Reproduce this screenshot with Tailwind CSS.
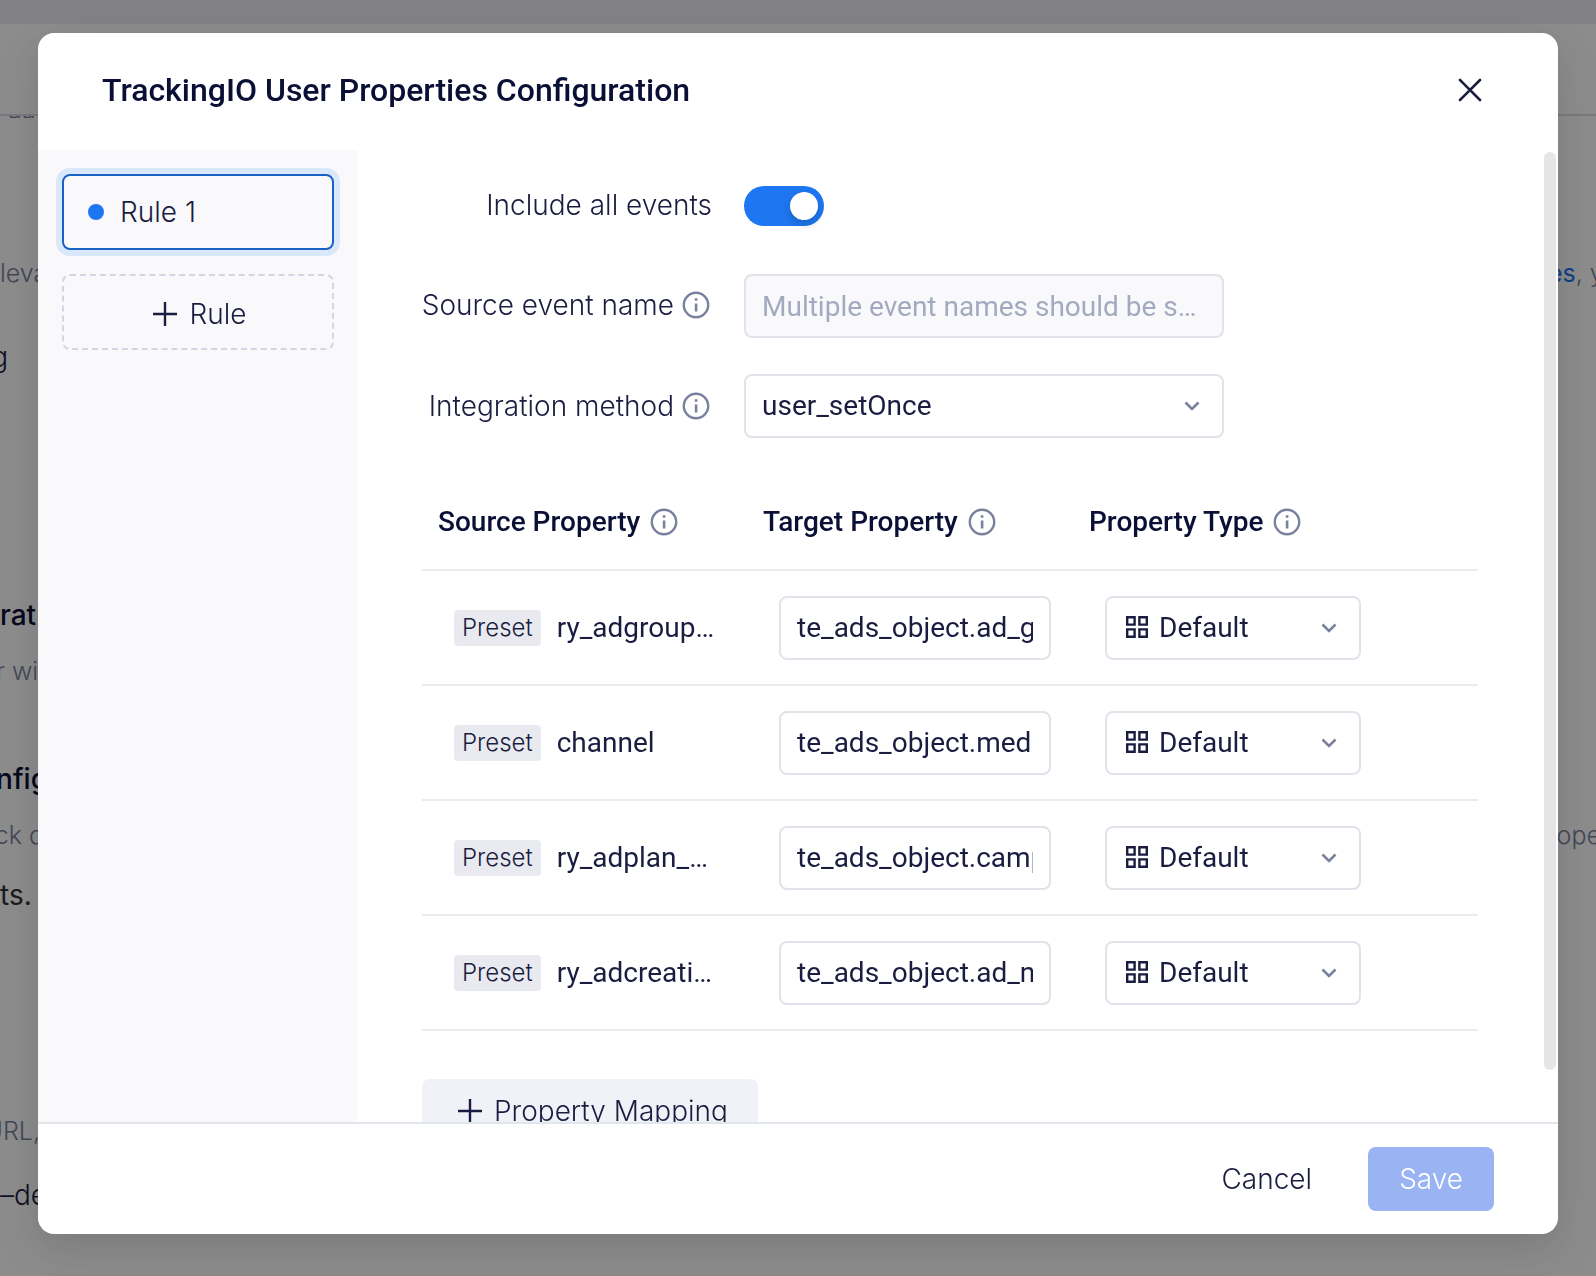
<!DOCTYPE html>
<html lang="en">
<head>
  <meta charset="utf-8"/>
  <meta name="viewport" content="width=device-width, initial-scale=1"/>
  <title>TrackingIO User Properties Configuration</title>
  <script src="https://cdn.jsdelivr.net/npm/@tailwindcss/browser@4"></script>
</head>
<body class="bg-white font-['Inter',sans-serif] font-light text-[#1a1d40] h-screen overflow-hidden">
  <!-- Icons -->
  <svg class="hidden">
    <symbol id="icon-info" viewBox="0 0 28 28">
      <circle cx="14" cy="14" r="12.2" fill="none" stroke="currentColor" stroke-width="2.4"/>
      <path d="M12.8 7.2h2.6v2.5h-2.6zM12.8 12.4h2.6v8h-2.6z" fill="currentColor"/>
    </symbol>
    <symbol id="icon-plus" viewBox="0 0 24 24">
      <path d="M12 0v24M0 12h24" fill="none" stroke="currentColor" stroke-width="2.4"/>
    </symbol>
    <symbol id="icon-chevron" viewBox="0 0 16 16">
      <path d="M1.5 4.5L8 11l6.5-6.5" fill="none" stroke="currentColor" stroke-width="2.6"/>
    </symbol>
    <symbol id="icon-grid" viewBox="0 0 22 22">
      <path d="M1.2 1.2h7.4v7.4H1.2zM13.4 1.2h7.4v7.4h-7.4zM1.2 13.4h7.4v7.4H1.2zM13.4 13.4h7.4v7.4h-7.4z" fill="none" stroke="currentColor" stroke-width="2.4"/>
    </symbol>
  </svg>

  <!-- Page behind the dialog -->
  <div class="h-full flex flex-col text-[25px] leading-[40px] text-[#7a819c]" aria-hidden="true">
    <div class="h-6 bg-[#ececf0]"></div>
    <div class="h-[92px] border-b-2 border-[#dcdde8]"></div>
    <div class="h-[2px] pl-2 flex items-end overflow-hidden leading-[18px]"><span>aa</span></div>
    <div class="flex justify-between mt-[135px]">
      <span>leva</span>
      <span class="w-12 whitespace-nowrap"><a href="#" class="font-normal text-[#1c76f2]">es</a>, y</span>
    </div>
    <div class="mt-11 w-2 flex justify-end text-[28px] text-[#1a1d40]">g</div>
    <div class="mt-[218px] text-[28px] font-medium text-[#0a0f35]">rat</div>
    <div class="mt-4 w-11 flex justify-end whitespace-nowrap">r wil</div>
    <div class="mt-[68px] w-12 flex justify-end text-[28px] font-medium text-[#0a0f35]">nfig</div>
    <div class="mt-4 flex justify-between">
      <span class="w-11 flex justify-end whitespace-nowrap">ck d</span>
      <span class="w-12">rope</span>
    </div>
    <div class="mt-5 text-[28px] font-normal text-[#333333]">ts.</div>
    <div class="mt-[196px] w-10 flex justify-end">URL,</div>
    <div class="mt-6 text-[28px] text-[#1a1d40]">–de</div>
  </div>

  <!-- Dialog -->
  <div class="fixed inset-0 flex bg-black/45 px-[38px] pt-[33px] pb-[42px]">
    <div role="dialog" aria-labelledby="dialogTitle" class="flex-1 min-w-0 flex flex-col overflow-hidden rounded-2xl bg-white shadow-[0_12px_32px_rgba(0,0,0,0.08),0_18px_56px_16px_rgba(0,0,0,0.05)]">
      <header class="h-[117px] shrink-0 px-16 pb-1 flex items-center justify-between">
        <h1 id="dialogTitle" class="font-['Roboto',sans-serif] text-[32px] leading-10 font-medium text-[#0a0f35]">TrackingIO User Properties Configuration</h1>
        <button type="button" aria-label="Close" class="p-3">
          <svg class="size-6" viewBox="0 0 24 24" fill="none" stroke="currentColor" stroke-width="2.6" stroke-linecap="round"><path d="M2 2l20 20M22 2L2 22"/></svg>
        </button>
      </header>

      <div class="flex-1 min-h-0 flex">
        <!-- Rules -->
        <aside class="w-80 shrink-0 bg-[#f9f9fc] p-6 flex flex-col gap-6 text-[28px]">
          <button type="button" class="h-[76px] flex items-center gap-4 px-6 rounded-lg border-2 border-[#1a62c6] bg-[#f9f9fc] ring-6 ring-[#d9e8fb]">
            <span class="size-4 rounded-full bg-[#1e76f2]"></span>
            Rule 1
          </button>
          <button type="button" class="h-[76px] pt-1 pl-1 flex items-center justify-center gap-3 rounded-lg border-2 border-dashed border-[#d2d5e3]">
            <svg class="size-6"><use href="#icon-plus"/></svg>
            Rule
          </button>
        </aside>

        <!-- Rule settings -->
        <main class="relative flex-1 min-w-0 overflow-hidden pt-6 pl-16 pr-20">
          <div class="flex flex-col gap-9 text-[28px]">
            <div class="h-16 flex items-center gap-8">
              <label for="includeAll" class="w-[290px] pb-[2px] text-right">Include all events</label>
              <input id="includeAll" type="checkbox" role="switch" checked class="appearance-none w-20 h-10 p-[6px] rounded-full bg-[#1e76f2] flex justify-end before:size-7 before:rounded-full before:bg-white before:shadow-[0_4px_8px_rgba(0,35,11,0.2)]"/>
            </div>
            <div class="h-16 flex items-center gap-8">
              <label for="sourceEvent" class="w-[290px] pr-[2px] pb-[2px] flex items-center justify-end gap-2 whitespace-nowrap">Source event name
                <svg class="size-7 shrink-0 text-[#7a819c]"><use href="#icon-info"/></svg>
              </label>
              <input id="sourceEvent" type="text" disabled placeholder="Multiple event names should be separated by commas" class="w-[480px] h-16 px-4 truncate rounded-lg border-2 border-[#e1e3eb] bg-[#f9f9fc] font-['Roboto',sans-serif] font-normal placeholder:text-[#a3aabf]"/>
            </div>
            <div class="h-16 flex items-center gap-8">
              <label for="method" class="w-[290px] pr-[2px] flex items-center justify-end gap-2 whitespace-nowrap">Integration method
                <svg class="size-7 shrink-0 text-[#7a819c]"><use href="#icon-info"/></svg>
              </label>
              <div class="relative">
                <select id="method" class="block appearance-none w-[480px] h-16 px-4 rounded-lg border-2 border-[#e1e3eb] bg-white font-['Roboto',sans-serif] font-normal">
                  <option>user_setOnce</option>
                </select>
                <svg class="absolute right-6 top-6 size-4 text-[#7a819c] pointer-events-none"><use href="#icon-chevron"/></svg>
              </div>
            </div>
          </div>

          <table class="mt-9 w-full table-fixed border-separate border-spacing-0 font-['Roboto',sans-serif] font-normal text-[28px]">
            <thead class="text-left text-[#0a0f35]">
              <tr>
                <th class="w-[325px] h-[97px] px-4 border-b-2 border-[#ebecf2] font-medium"><span class="flex items-center gap-[10px]">Source Property <svg class="size-7 text-[#7a819c]"><use href="#icon-info"/></svg></span></th>
                <th class="w-[326px] h-[97px] px-4 border-b-2 border-[#ebecf2] font-medium"><span class="flex items-center gap-[10px]">Target Property <svg class="size-7 text-[#7a819c]"><use href="#icon-info"/></svg></span></th>
                <th class="h-[97px] px-4 border-b-2 border-[#ebecf2] font-medium"><span class="flex items-center gap-[10px]">Property Type <svg class="size-7 text-[#7a819c]"><use href="#icon-info"/></svg></span></th>
              </tr>
            </thead>
            <tbody id="mappings"></tbody>
          </table>

          <button type="button" class="mt-12 h-16 pl-9 pr-[30px] flex items-center gap-3 rounded-lg bg-[#f1f2f8] text-[28px]">
            <svg class="size-6"><use href="#icon-plus"/></svg>
            Property Mapping
          </button>

          <!-- Scrollbar thumb -->
          <div class="absolute right-[2px] top-[2px] bottom-[52px] w-3 rounded-full bg-[#e5e5e5]"></div>
        </main>
      </div>

      <footer class="h-28 shrink-0 px-16 flex items-center justify-end gap-6 border-t-2 border-[#e1e5ec] text-[28px]">
        <button type="button" class="h-16 px-8">Cancel</button>
        <button type="button" disabled class="h-16 px-[31px] rounded-lg bg-[#99b3f3] text-white">Save</button>
      </footer>
    </div>
  </div>

  <script>
    const mappings = [
      { source: 'ry_adgroup_name', target: 'te_ads_object.ad_group_name' },
      { source: 'channel', target: 'te_ads_object.media_source' },
      { source: 'ry_adplan_name', target: 'te_ads_object.campaign_name' },
      { source: 'ry_adcreative_name', target: 'te_ads_object.ad_name' },
    ];

    document.getElementById('mappings').innerHTML = mappings.map(m => `
      <tr>
        <td class="h-[115px] pl-8 pr-[30px] border-b-2 border-[#ebecf2]">
          <div class="flex items-center gap-4">
            <span class="h-9 px-2 rounded-sm bg-[#e9eaf0] font-['Inter',sans-serif] font-light text-[24px] leading-9">Preset</span>
            <span class="truncate">${m.source}</span>
          </div>
        </td>
        <td class="h-[115px] pl-8 border-b-2 border-[#ebecf2]">
          <input type="text" aria-label="Target property for ${m.source}" value="${m.target}" class="block w-[272px] h-16 px-4 rounded-lg border-2 border-[#e1e3eb]"/>
        </td>
        <td class="h-[115px] pl-8 border-b-2 border-[#ebecf2]">
          <div class="relative w-64">
            <svg class="absolute left-[21px] top-5 size-[22px] pointer-events-none"><use href="#icon-grid"/></svg>
            <select aria-label="Property type for ${m.source}" class="block appearance-none w-full h-16 pl-[52px] rounded-lg border-2 border-[#e1e3eb]">
              <option>Default</option>
            </select>
            <svg class="absolute right-6 top-6 size-4 text-[#7a819c] pointer-events-none"><use href="#icon-chevron"/></svg>
          </div>
        </td>
      </tr>
    `).join('');
  </script>
</body>
</html>
